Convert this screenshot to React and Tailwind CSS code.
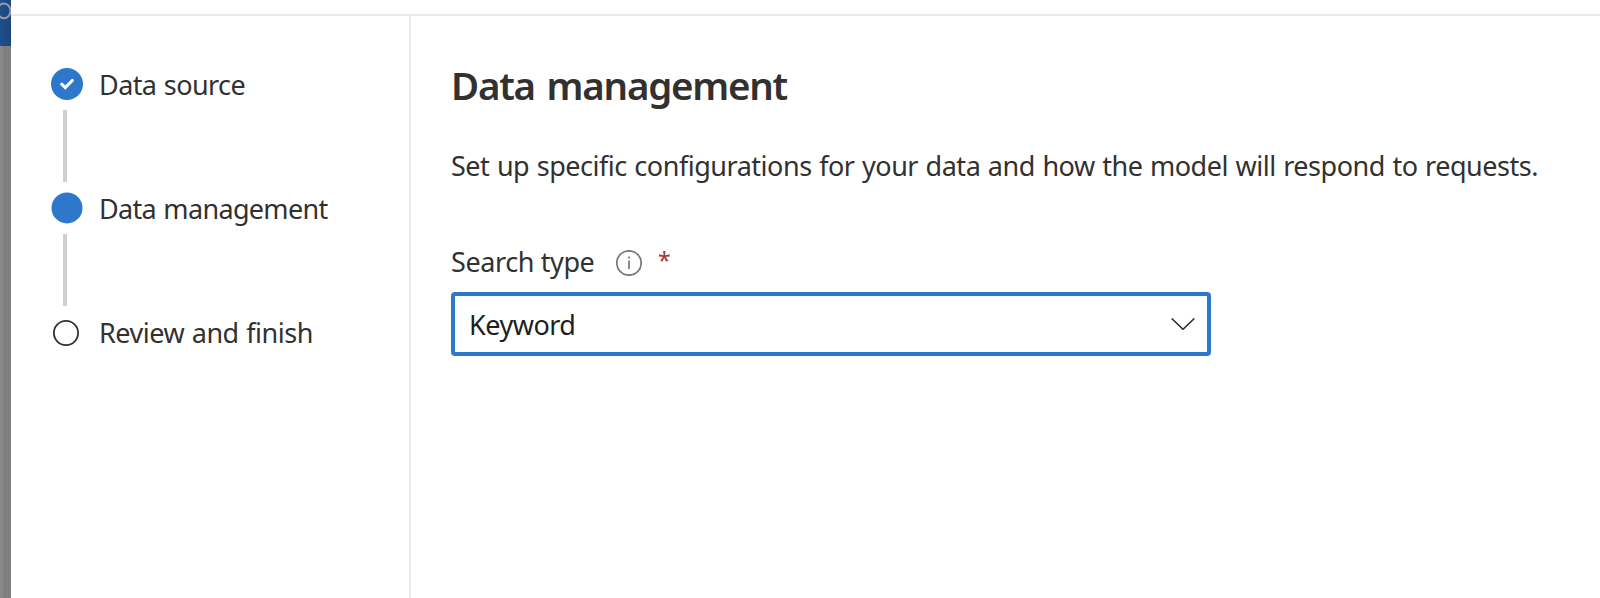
const steps = [
  { label: 'Data source', state: 'done', spacing: 'tracking-[-0.58px] [word-spacing:1px]' },
  { label: 'Data management', state: 'current', spacing: 'tracking-[-0.68px] [word-spacing:1px]' },
  { label: 'Review and finish', state: 'upcoming', spacing: 'tracking-[-0.48px] [word-spacing:1px]' },
];

function StepMarker({ state }) {
  return (
    <svg className="h-8 w-8 shrink-0" viewBox="0 0 32 32" fill="none" aria-hidden="true">
      {state === 'done' && (
        <>
          <circle cx="16" cy="16" r="16" fill="#2e78cc" />
          <path
            d="M10.7 16.2 14.3 19.6 21.3 12.5"
            stroke="#fff"
            strokeWidth="3.1"
            strokeLinecap="round"
            strokeLinejoin="miter"
          />
        </>
      )}
      {state === 'current' && <circle cx="16" cy="15.9" r="15.5" fill="#2e78cc" />}
      {state === 'upcoming' && (
        <circle cx="15" cy="17" r="12.1" stroke="#323130" strokeWidth="1.8" />
      )}
    </svg>
  );
}

function Step({ label, state, spacing, last }) {
  return (
    <li>
      <div className="flex h-8 items-center gap-4">
        <StepMarker state={state} />
        <span className={`pt-px text-[27px] leading-8 whitespace-nowrap ${spacing}`}>{label}</span>
      </div>
      {!last && <div className="my-2.5 ml-3 h-18 w-1 bg-[#d0d0ce]" />}
    </li>
  );
}

export default function App() {
  return (
    <div className="flex h-[598px] w-full overflow-hidden bg-white font-['Noto_Sans','Open_Sans',sans-serif] text-[#323130]">
      <div className="flex w-[11px] shrink-0 flex-col overflow-hidden">
        <div className="h-[46px] bg-gradient-to-r from-[#1f4f8b] to-[#1b4680]">
          <svg className="h-[46px] w-[11px]" viewBox="0 0 11 46" fill="none" aria-hidden="true">
            <ellipse cx="4" cy="10.9" rx="6.5" ry="7.4" stroke="#959ba3" strokeWidth="2" />
          </svg>
        </div>
        <div className="flex flex-1 bg-gradient-to-r from-[#898989] to-[#7d7d7d]">
          <div className="ml-1 w-0.5 bg-[#7b7b7b]" />
        </div>
      </div>
      <div className="flex min-w-0 flex-1 flex-col">
        <div className="h-4 shrink-0 border-b-2 border-[#eaeaea]" />
        <div className="flex flex-1">
          <nav className="w-[400px] shrink-0 border-r-2 border-[#eaeaea] pt-[52px] pl-10">
            <ol>
              {steps.map((step, i) => (
                <Step key={step.label} {...step} last={i === steps.length - 1} />
              ))}
            </ol>
          </nav>
          <main className="flex-1 pt-11 pl-10">
            <h1 className="text-[38.5px] leading-[50px] font-semibold tracking-[-1.25px] [word-spacing:3px] whitespace-nowrap">
              Data management
            </h1>
            <p className="mt-9 text-[27px] leading-10 tracking-[-0.48px] [word-spacing:1px] whitespace-nowrap">
              Set up specific configurations for your data and how the model will respond to requests.
            </p>
            <div className="mt-14 flex h-10 items-center">
              <label className="w-[165px] text-[27px] leading-10 tracking-[-0.4px] whitespace-nowrap">
                Search type
              </label>
              <svg className="mt-0.5 h-[26px] w-[26px]" viewBox="0 0 26 26" fill="none" aria-hidden="true">
                <circle cx="13" cy="13" r="12.2" stroke="#777674" strokeWidth="1.7" />
                <path d="M13 10.6V19" stroke="#777674" strokeWidth="1.7" />
                <circle cx="13" cy="7.5" r="1.1" fill="#777674" />
              </svg>
              <span className="ml-4 pb-1 text-[23px] leading-10 text-[#a4373a]">*</span>
            </div>
            <button
              type="button"
              className="mt-2.5 flex h-16 w-[760px] items-center justify-between rounded-[4px] border-4 border-[#2e78cc] pr-3 pl-3.5 text-left text-[#201f1e]"
            >
              <span className="pt-0.5 text-[27px] leading-10 tracking-[-0.5px]">Keyword</span>
              <svg className="h-3 w-6" viewBox="0 0 24 12" fill="none" aria-hidden="true">
                <path d="M.7.5 12 11.3 23.3.5" stroke="#323130" strokeWidth="1.6" />
              </svg>
            </button>
          </main>
        </div>
      </div>
    </div>
  );
}
